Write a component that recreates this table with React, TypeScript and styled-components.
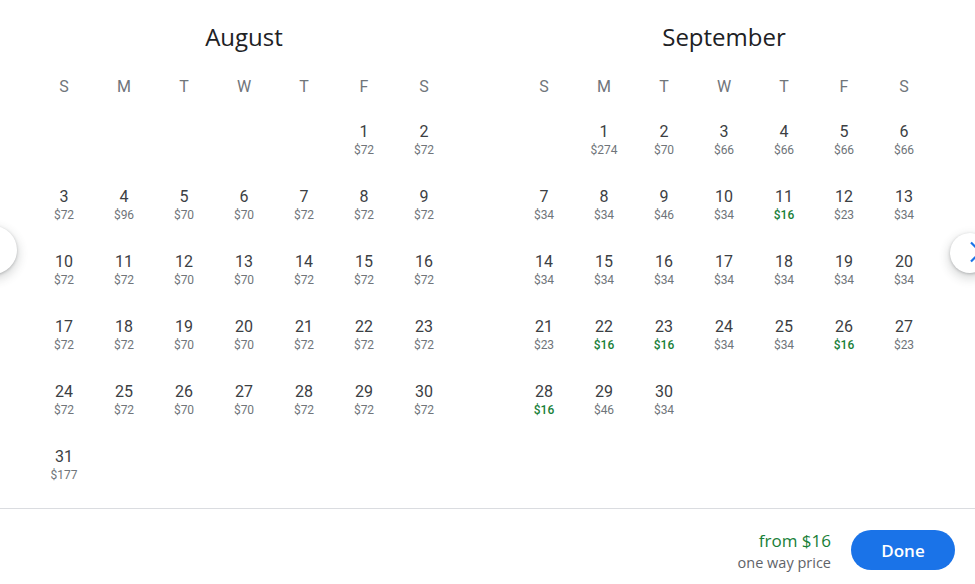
import styled, { createGlobalStyle } from 'styled-components';

const GlobalStyle = createGlobalStyle`
  html, body {
    margin: 0;
    padding: 0;
    background: #fff;
    font-family: Roboto, Arial, sans-serif;
  }
`;

const Page = styled.div`
  position: relative;
  width: 975px;
  height: 584px;
  overflow: hidden;
  display: flex;
  flex-direction: column;
`;

const Months = styled.div`
  display: flex;
  gap: 60px;
  padding-left: 34px;
  height: 508px;
  box-sizing: border-box;
`;

const MonthBox = styled.section`
  width: 420px;
`;

const MonthTitle = styled.h2`
  margin: 22px 0 0;
  height: 30px;
  line-height: 30px;
  text-align: center;
  font-family: 'Open Sans', Roboto, sans-serif;
  font-size: 24px;
  font-weight: 400;
  color: #202124;
`;

const Grid = styled.div`
  display: grid;
  grid-template-columns: repeat(7, 60px);
`;

const WeekdayRow = styled(Grid)`
  margin-top: 20px;
`;

const Weekday = styled.div`
  height: 30px;
  line-height: 30px;
  text-align: center;
  font-size: 16px;
  color: #70757a;
`;

const Cell = styled.div`
  height: 65px;
  box-sizing: border-box;
  padding-top: 20px;
  text-align: center;
`;

const DayNumber = styled.div`
  line-height: 20px;
  font-size: 16px;
  color: #3c4043;
`;

const Price = styled.div<{ $low?: boolean }>`
  margin-top: 1px;
  line-height: 14px;
  font-size: 12px;
  font-weight: ${p => (p.$low ? 500 : 400)};
  color: ${p => (p.$low ? '#188038' : '#70757a')};
`;

const NavButton = styled.button<{ $side: 'left' | 'right' }>`
  position: absolute;
  ${p => (p.$side === 'left'
    ? 'left: -31px; top: 226px; width: 48px; height: 48px;'
    : 'right: -15px; top: 233px; width: 40px; height: 40px;')}
  border-radius: 50%;
  border: none;
  padding: 0;
  background: #fff;
  box-shadow: 0 1px 3px rgba(60, 64, 67, 0.3), 0 4px 8px 3px rgba(60, 64, 67, 0.15);
  display: flex;
  align-items: center;
  justify-content: center;
  cursor: pointer;
`;

const Footer = styled.footer`
  flex: 1;
  border-top: 1px solid #dadce0;
  display: flex;
  align-items: center;
  justify-content: flex-end;
  gap: 20px;
  padding: 7px 20px 0 0;
`;

const PriceSummary = styled.div`
  padding-top: 4px;
  text-align: right;
  font-family: 'Open Sans', Roboto, sans-serif;
`;

const FromPrice = styled.div`
  font-size: 17px;
  line-height: 22px;
  color: #188038;
`;

const PriceNote = styled.div`
  font-size: 14.5px;
  line-height: 22px;
  color: #5f6368;
`;

const DoneButton = styled.button`
  width: 104px;
  height: 40px;
  border-radius: 20px;
  border: none;
  background: #1a73e8;
  color: #fff;
  font-family: 'Open Sans', Roboto, sans-serif;
  font-size: 17px;
  font-weight: 600;
  cursor: pointer;
`;

type Day = [number, number, boolean?];

interface MonthProps {
  name: string;
  offset: number;
  days: Day[];
}

const WEEKDAYS = ['S', 'M', 'T', 'W', 'T', 'F', 'S'];

const Month = ({ name, offset, days }: MonthProps) => (
  <MonthBox>
    <MonthTitle>{name}</MonthTitle>
    <WeekdayRow>
      {WEEKDAYS.map((d, i) => <Weekday key={i}>{d}</Weekday>)}
    </WeekdayRow>
    <Grid>
      {Array.from({ length: offset }).map((_, i) => <Cell key={'e' + i} />)}
      {days.map(([n, price, low]) => (
        <Cell key={n}>
          <DayNumber>{n}</DayNumber>
          <Price $low={low}>${price}</Price>
        </Cell>
      ))}
    </Grid>
  </MonthBox>
);

const augustPrices = [
  72, 72,
  72, 96, 70, 70, 72, 72, 72,
  72, 72, 70, 70, 72, 72, 72,
  72, 72, 70, 70, 72, 72, 72,
  72, 72, 70, 70, 72, 72, 72,
  177,
];

const septemberPrices = [
  274, 70, 66, 66, 66, 66,
  34, 34, 46, 34, 16, 23, 34,
  34, 34, 34, 34, 34, 34, 34,
  23, 16, 16, 34, 34, 16, 23,
  16, 46, 34,
];

const toDays = (prices: number[]): Day[] =>
  prices.map((p, i) => [i + 1, p, p === 16]);

// only the left half of the arrow peeks in from the window edge
const NextArrow = () => (
  <svg width="24" height="24" viewBox="0 0 24 24">
    <polyline points="13,1.5 22.5,11 13,20.5" fill="none" stroke="#1a73e8" strokeWidth="2.2" />
  </svg>
);

export default function App() {
  return (
    <Page>
      <GlobalStyle />
      <Months>
        <Month name="August" offset={5} days={toDays(augustPrices)} />
        <Month name="September" offset={1} days={toDays(septemberPrices)} />
      </Months>
      <NavButton $side="left" aria-label="Previous" />
      <NavButton $side="right" aria-label="Next">
        <NextArrow />
      </NavButton>
      <Footer>
        <PriceSummary>
          <FromPrice>from $16</FromPrice>
          <PriceNote>one way price</PriceNote>
        </PriceSummary>
        <DoneButton>Done</DoneButton>
      </Footer>
    </Page>
  );
}
